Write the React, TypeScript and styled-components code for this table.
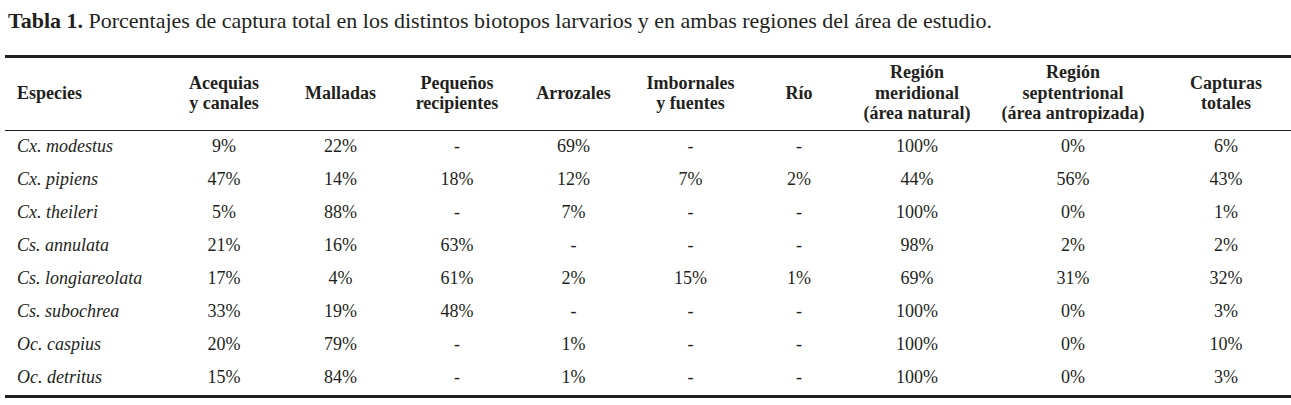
import { createGlobalStyle } from "styled-components";
import styled from "styled-components";

const INK = "#231f20";
const COLUMNS = "161px 116px 117px 116px 117px 117px 100px 136px 176px 130px";

const GlobalStyle = createGlobalStyle`
  html, body {
    margin: 0;
    background: #fff;
  }
  body {
    font-family: "Liberation Serif", "Times New Roman", serif;
    color: ${INK};
  }
`;

const Page = styled.div`
  width: 1291px;
  padding-top: 8px;
`;

const Caption = styled.p`
  margin: 0 0 22px 8px;
  font-size: 22px;
  line-height: 25px;
  white-space: nowrap;
  b {
    font-weight: 700;
  }
`;

const Table = styled.div`
  margin-left: 5px;
  width: 1286px;
  border-top: 3px solid ${INK};
  border-bottom: 3px solid ${INK};
`;

const HeadRow = styled.div`
  display: grid;
  grid-template-columns: ${COLUMNS};
  height: 72px;
  border-bottom: 1px solid ${INK};
`;

const Row = styled.div`
  display: grid;
  grid-template-columns: ${COLUMNS};
  height: 33px;
`;

const HeadCell = styled.div<{ $first?: boolean }>`
  display: flex;
  flex-direction: column;
  justify-content: center;
  align-items: ${(p) => (p.$first ? "flex-start" : "center")};
  padding-left: ${(p) => (p.$first ? "12px" : "0")};
  padding-bottom: 2px;
  font-size: 18px;
  line-height: 20.5px;
  font-weight: 700;
  text-align: center;
  white-space: nowrap;
`;

const Cell = styled.div<{ $first?: boolean }>`
  display: flex;
  align-items: center;
  justify-content: ${(p) => (p.$first ? "flex-start" : "center")};
  padding-left: ${(p) => (p.$first ? "12px" : "0")};
  padding-bottom: 3px;
  font-size: 18px;
  font-style: ${(p) => (p.$first ? "italic" : "normal")};
  white-space: nowrap;
`;

const headers = [
  ["Especies"],
  ["Acequias", "y canales"],
  ["Malladas"],
  ["Pequeños", "recipientes"],
  ["Arrozales"],
  ["Imbornales", "y fuentes"],
  ["Río"],
  ["Región", "meridional", "(área natural)"],
  ["Región", "septentrional", "(área antropizada)"],
  ["Capturas", "totales"],
];

const rows = [
  ["Cx. modestus", "9%", "22%", "-", "69%", "-", "-", "100%", "0%", "6%"],
  ["Cx. pipiens", "47%", "14%", "18%", "12%", "7%", "2%", "44%", "56%", "43%"],
  ["Cx. theileri", "5%", "88%", "-", "7%", "-", "-", "100%", "0%", "1%"],
  ["Cs. annulata", "21%", "16%", "63%", "-", "-", "-", "98%", "2%", "2%"],
  ["Cs. longiareolata", "17%", "4%", "61%", "2%", "15%", "1%", "69%", "31%", "32%"],
  ["Cs. subochrea", "33%", "19%", "48%", "-", "-", "-", "100%", "0%", "3%"],
  ["Oc. caspius", "20%", "79%", "-", "1%", "-", "-", "100%", "0%", "10%"],
  ["Oc. detritus", "15%", "84%", "-", "1%", "-", "-", "100%", "0%", "3%"],
];

export default function App() {
  return (
    <Page>
      <GlobalStyle />
      <Caption>
        <b>Tabla 1.</b> Porcentajes de captura total en los distintos biotopos
        larvarios y en ambas regiones del área de estudio.
      </Caption>
      <Table>
        <HeadRow>
          {headers.map((lines, i) => (
            <HeadCell key={i} $first={i === 0}>
              {lines.map((l) => (
                <span key={l}>{l}</span>
              ))}
            </HeadCell>
          ))}
        </HeadRow>
        {rows.map((r) => (
          <Row key={r[0]}>
            {r.map((v, i) => (
              <Cell key={i} $first={i === 0}>
                {v}
              </Cell>
            ))}
          </Row>
        ))}
      </Table>
    </Page>
  );
}
